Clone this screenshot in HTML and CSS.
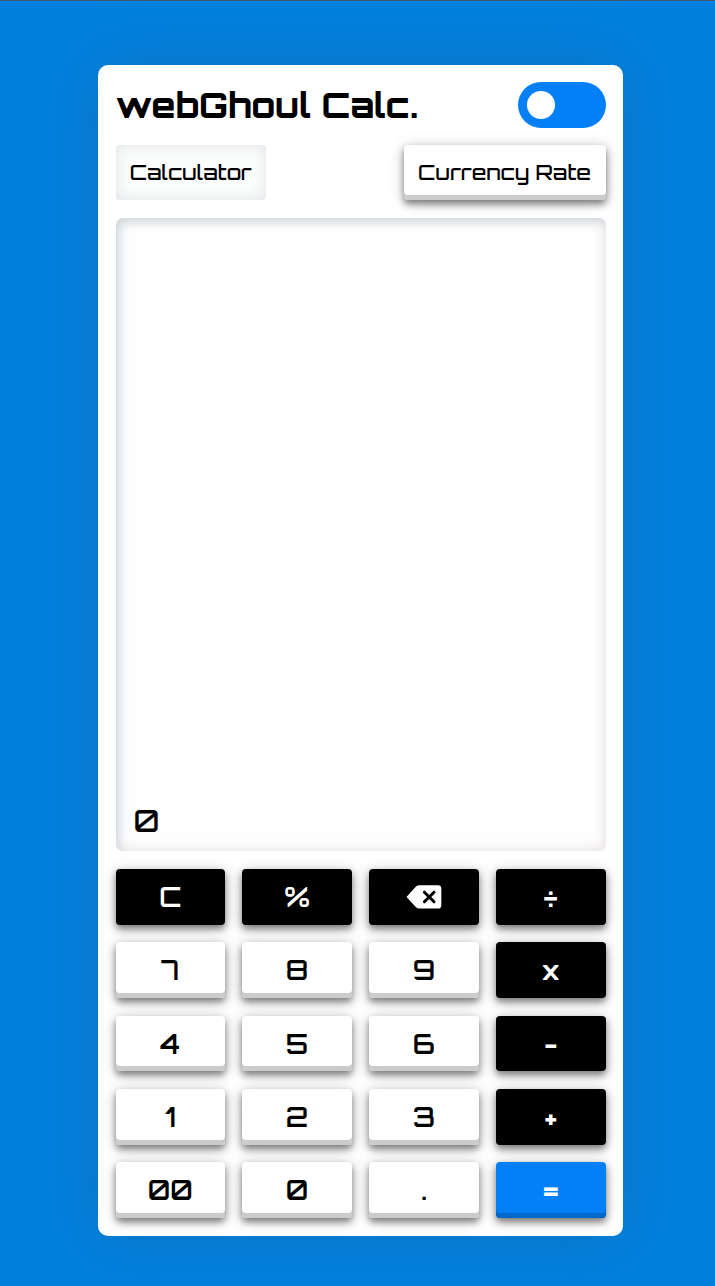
FILE: index.html
```html
<!DOCTYPE html>
<html lang="en">
<head>
<meta charset="utf-8">
<title>webGhoul Calc.</title>
<link rel="stylesheet" href="styles.css">
</head>
<body>
<main class="card">
  <header class="header">
    <h1 class="title">webGhoul Calc.</h1>
    <button class="toggle" aria-label="Toggle theme"><span class="knob"></span></button>
  </header>
  <nav class="tabs">
    <button class="tab tab-active">Calculator</button>
    <button class="tab tab-raised">Currency Rate</button>
  </nav>
  <section class="display"><span class="value">0</span></section>
  <section class="keys">
    <button class="key dark"><span class="digit">C</span></button>
    <button class="key dark"><span class="digit">%</span></button>
    <button class="key dark" aria-label="Backspace">
      <svg class="backspace" viewBox="0 0 36 24"><path fill="#fff" d="M0.5 12 10 1.6Q11.4.3 13.2.3H32Q35.3.3 35.3 3.4V20.4Q35.3 23.5 32 23.5H13.2Q11.4 23.5 10 22.2Z"/><path d="M18.4 7.2 28 16.8M28 7.2 18.4 16.8" fill="none" stroke="#000" stroke-width="3" stroke-linecap="round"/></svg>
    </button>
    <button class="key dark"><span class="op">÷</span></button>
    <button class="key"><span class="digit">7</span></button>
    <button class="key"><span class="digit">8</span></button>
    <button class="key"><span class="digit">9</span></button>
    <button class="key dark"><span class="op">x</span></button>
    <button class="key"><span class="digit">4</span></button>
    <button class="key"><span class="digit">5</span></button>
    <button class="key"><span class="digit">6</span></button>
    <button class="key dark"><span class="op">-</span></button>
    <button class="key"><span class="digit">1</span></button>
    <button class="key"><span class="digit">2</span></button>
    <button class="key"><span class="digit">3</span></button>
    <button class="key dark"><span class="op">+</span></button>
    <button class="key"><span class="digit">00</span></button>
    <button class="key"><span class="digit">0</span></button>
    <button class="key"><span class="digit">.</span></button>
    <button class="key equal"><span class="op">=</span></button>
  </section>
</main>
</body>
</html>
```
FILE: styles.css
```css
* { box-sizing: border-box; }
body {
  margin: 0;
  height: 1286px;
  padding: 64px 0 0 98px;
  overflow: hidden;
  border-top: 1px solid #405c72;
  background: #0080de;
  font-family: Orbitron, Inter, sans-serif;
  color: #000;
}
button { border: 0; padding: 0; margin: 0; font: inherit; color: inherit; }
span { display: inline-block; }
.card {
  width: 525px;
  height: 1171px;
  padding: 17px 17.5px;
  border-radius: 10px;
  background: #fff;
  box-shadow: 0 0 60px rgba(40, 100, 150, .4);
}
.header { display: flex; justify-content: space-between; height: 46px; }
.title { margin: 0; font-size: 35px; line-height: 47px; font-weight: 800; white-space: nowrap; }
.toggle { display: flex; align-items: center; width: 87.5px; height: 46px; padding-left: 8.5px; border-radius: 23px; background: #0380f5; }
.knob { width: 28.5px; height: 28.5px; border-radius: 50%; background: #fff; }
.tabs { display: flex; justify-content: space-between; margin-top: 17px; height: 55px; }
.tab { border-radius: 4px; font-size: 21px; font-weight: 500; line-height: 55px; white-space: nowrap; background: #fff; }
.tab-active { width: 150.5px; box-shadow: inset 0 0 14px #dfe2e5; background: #fbfcfc; }
.tab-raised { width: 202px; }
.tab-raised, .key {
  box-shadow: inset 0 -5px 0 #cbcbcb, 0 4px 7px rgba(0, 0, 0, .45), 0 2px 16px rgba(0, 0, 0, .2);
}
.display {
  display: flex;
  align-items: flex-end;
  height: 633px;
  margin-top: 18px;
  padding: 0 18px 10px;
  border-radius: 7px;
  background: #fefefe;
  box-shadow: inset 4px 5px 10px #d2d8de, inset -4px -4px 10px #f1ebeb;
}
.value { font-size: 31px; line-height: 40px; font-weight: 500; }
.keys { display: grid; grid-template-columns: repeat(4, 1fr); grid-auto-rows: 55.5px; gap: 17.8px 17.4px; margin-top: 18.2px; }
.key { display: flex; align-items: center; justify-content: center; border-radius: 4px; background: #fff; }
.key.dark { background: #000; color: #fff; box-shadow: 0 4px 7px rgba(0, 0, 0, .45), 0 2px 16px rgba(0, 0, 0, .2); }
.key.equal { background: #0380f5; color: #fff; box-shadow: inset 0 -5px 0 #0268ca, 0 4px 7px rgba(0, 0, 0, .45), 0 2px 16px rgba(0, 0, 0, .2); }
.digit { font-size: 27px; line-height: 34px; font-weight: 600; }
.backspace { width: 36px; height: 24px; }
.op { font-size: 26px; line-height: 34px; font-weight: 700; }
```
